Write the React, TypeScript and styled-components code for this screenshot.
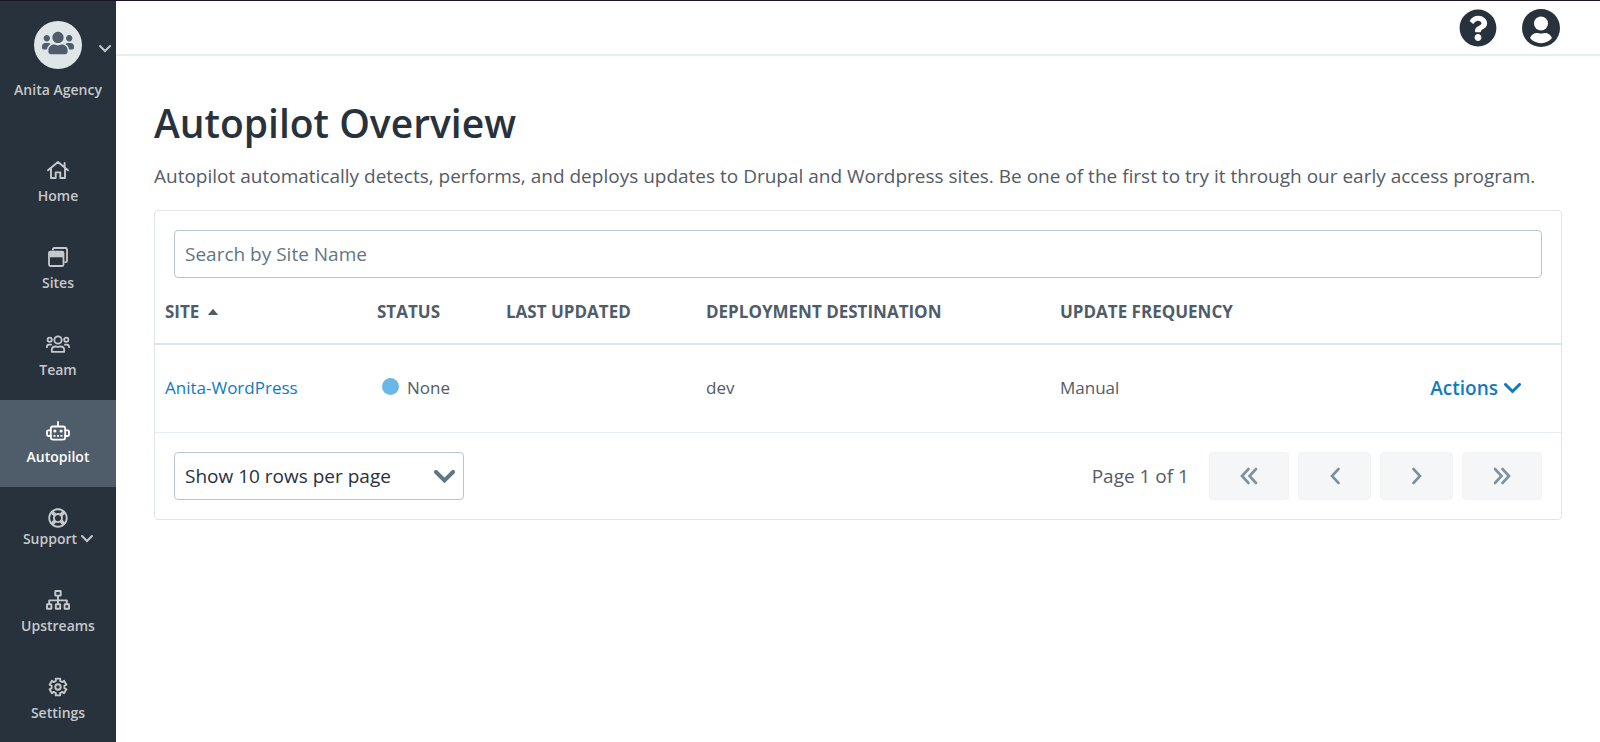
import React from "react";
import styled, { createGlobalStyle } from "styled-components";
import { FaQuestionCircle, FaRegLifeRing, FaUsers } from "react-icons/fa";

const color = {
  ink: "#28323c",
  slate: "#4f5d6b",
  text: "#545b65",
  muted: "#5f7686",
  link: "#0f7bbf",
  line: "#dde6e9",
  lineSoft: "#e8eeef",
  field: "#b5c5d0",
  nav: "#c6c9cc",
};

const GlobalStyle = createGlobalStyle`
  *, *::before, *::after { box-sizing: border-box; }
  body {
    margin: 0;
    background: #fff;
    color: ${color.text};
    font-family: "Open Sans", "Noto Sans", sans-serif;
    font-size: 19px;
    font-weight: 450;
  }
  button, input, select { font: inherit; }
  svg { display: block; flex: none; }
`;

const Page = styled.div`
  display: flex;
  min-height: 100vh;
  border-top: 1px solid #1a1424;
`;

/* ---------- Sidebar ---------- */

const Sidebar = styled.aside`
  flex: none;
  width: 116px;
  background: ${color.ink};
  color: ${color.nav};
  font-size: 14px;
  font-weight: 550;
  line-height: 20px;
`;

const Workspace = styled.button`
  display: grid;
  grid-template-columns: 1fr 48px 1fr;
  align-items: center;
  row-gap: 11px;
  width: 100%;
  height: 138px;
  padding: 20px 0 0;
  align-content: start;
  border: 0;
  background: none;
  color: inherit;
  cursor: pointer;
`;

const Avatar = styled.span`
  grid-column: 2;
  display: grid;
  place-items: center;
  width: 48px;
  height: 48px;
  padding-bottom: 4px;
  border-radius: 50%;
  background: #dfe6e8;
  color: ${color.slate};
`;

const WorkspaceToggle = styled.span`
  justify-self: end;
  padding: 7px 5px 0 0;
`;

const WorkspaceName = styled.span`
  grid-column: 1 / -1;
  text-align: center;
`;

const NavLink = styled.a<{ $active?: boolean; $compact?: boolean }>`
  display: flex;
  flex-direction: column;
  align-items: center;
  gap: ${(p) => (p.$compact ? 0 : 5)}px;
  height: ${(p) => (p.$compact ? 82 : 87)}px;
  padding-top: 20px;
  background: ${(p) => (p.$active ? color.slate : "none")};
  color: ${(p) => (p.$active ? "#fff" : "inherit")};
  text-decoration: none;
`;

const NavIcon = styled.span`
  display: grid;
  place-items: center;
  height: 22px;
`;

const NavLabel = styled.span`
  display: flex;
  align-items: center;
  gap: 4px;
`;

/* ---------- Header ---------- */

const Content = styled.div`
  flex: 1;
  min-width: 0;
`;

const TopBar = styled.header`
  display: flex;
  justify-content: flex-end;
  align-items: center;
  gap: 25px;
  height: 55px;
  padding-right: 40px;
  border-bottom: 2px solid ${color.lineSoft};
`;

const RoundButton = styled.button`
  padding: 0;
  border: 0;
  border-radius: 50%;
  background: none;
  color: ${color.ink};
  cursor: pointer;
`;

/* ---------- Main ---------- */

const Main = styled.main`
  padding: 40px 38px;
`;

const Title = styled.h1`
  margin: 0;
  color: ${color.ink};
  font-size: 39px;
  font-weight: 600;
  line-height: 54px;
`;

const Intro = styled.p`
  margin: 12px 0 20px;
  line-height: 28px;
`;

const Card = styled.section`
  border: 1px solid ${color.line};
  border-radius: 4px;
`;

const SearchRow = styled.div`
  padding: 19px 19px 0;
`;

const SearchInput = styled.input`
  display: block;
  width: 100%;
  height: 48px;
  padding: 0 10px;
  border: 1px solid ${color.field};
  border-radius: 4px;
  background: #fff;
  color: ${color.ink};
  &::placeholder { color: ${color.muted}; opacity: 1; }
`;

const Table = styled.table`
  width: 100%;
  table-layout: fixed;
  border-collapse: collapse;
  font-size: 17px;
  font-weight: 400;
  line-height: 24px;
`;

const Col = styled.col<{ $width?: number }>`
  width: ${(p) => (p.$width ? `${p.$width}px` : "auto")};
`;

const HeadCell = styled.th`
  height: 66px;
  padding: 2px 10px 0;
  border-bottom: 2px solid ${color.line};
  color: ${color.slate};
  font-weight: 700;
  text-align: left;
  white-space: nowrap;
`;

const SortButton = styled.button`
  display: flex;
  align-items: center;
  gap: 9px;
  padding: 0;
  border: 0;
  background: none;
  color: inherit;
  cursor: pointer;
`;

const Cell = styled.td<{ $end?: boolean }>`
  height: 88px;
  padding: 0 ${(p) => (p.$end ? 40 : 10)}px 0 10px;
  border-bottom: 1px solid ${color.lineSoft};
`;

const SiteLink = styled.a`
  color: ${color.link};
  text-decoration: none;
`;

const Status = styled.span`
  display: flex;
  align-items: center;
  gap: 8px;
  padding-left: 5px;
`;

const Dot = styled.span`
  width: 17px;
  height: 17px;
  margin-bottom: 4px;
  border-radius: 50%;
  background: #6bb7e8;
`;

const ActionsButton = styled.button`
  display: flex;
  align-items: center;
  gap: 6px;
  margin-left: auto;
  padding: 0;
  border: 0;
  background: none;
  color: ${color.link};
  font-size: 19px;
  font-weight: 600;
  cursor: pointer;
`;

const Footer = styled.div`
  display: flex;
  justify-content: space-between;
  align-items: center;
  padding: 19px;
`;

const SelectBox = styled.div`
  position: relative;
  width: 290px;
`;

const Select = styled.select`
  display: block;
  width: 100%;
  height: 48px;
  padding: 0 40px 0 10px;
  appearance: none;
  border: 1px solid ${color.field};
  border-radius: 4px;
  background: #fff;
  color: ${color.ink};
`;

const SelectArrow = styled.span`
  position: absolute;
  top: 18px;
  right: 9px;
  color: ${color.muted};
  pointer-events: none;
`;

const Pager = styled.nav`
  display: flex;
  align-items: center;
  gap: 9px;
`;

const PageInfo = styled.span`
  margin-right: 11px;
`;

const PageButton = styled.button<{ $wide?: boolean }>`
  display: grid;
  place-items: center;
  width: ${(p) => (p.$wide ? 80 : 73)}px;
  height: 48px;
  padding: 0;
  border: 1px solid #f1f4f5;
  border-radius: 4px;
  background: #f4f6f8;
  color: #82909c;
`;

/* ---------- Icons ---------- */

const line = {
  fill: "none",
  stroke: "currentColor",
  strokeWidth: 2,
  strokeLinecap: "round",
  strokeLinejoin: "round",
} as const;

/* Right-angled chevron: its depth follows from its width. */
const Chevron = ({ width, weight }: { width: number; weight: number }) => {
  const m = weight / 2;
  return (
    <svg width={width} height={Math.ceil(width / 2 + weight * 0.7)} aria-hidden="true">
      <path
        {...line}
        strokeWidth={weight}
        strokeLinejoin="miter"
        d={`M${m} ${m}L${width / 2} ${width / 2}L${width - m} ${m}`}
      />
    </svg>
  );
};

const HomeIcon = () => (
  <svg width="24" height="20" viewBox="0 0 24 20" aria-hidden="true">
    <path {...line} strokeWidth={1.9} d="M2 10.3L12 2l10 8.3M18.6 3v4M5 8.6V18h4.7v-5.6h4.6V18H19V8.6" />
  </svg>
);

const SitesIcon = () => (
  <svg width="20" height="20" viewBox="0 0 20 20" aria-hidden="true">
    <path {...line} strokeWidth={1.8} d="M4.9 2.8V2.4Q4.9 1 6.3 1H17.6Q19 1 19 2.4V13.7Q19 15.1 17.6 15.1H17" />
    <rect {...line} strokeWidth={1.8} x="1" y="4.6" width="14.5" height="14.4" rx="1.4" />
    <path fill="currentColor" d="M1 5h14.5v5.3H1z" />
  </svg>
);

const TeamIcon = () => (
  <svg width="24" height="18" viewBox="0 0 24 18" aria-hidden="true">
    <g {...line} strokeWidth={1.8}>
      <circle cx="12" cy="5" r="3.7" />
      <circle cx="3.7" cy="4.7" r="2.1" />
      <circle cx="20.3" cy="4.7" r="2.1" />
      <path d="M5.8 16.8v-1.6c0-2.2 1.5-3.7 3.5-3.7 1 0 1.5.5 2.7.5s1.7-.5 2.7-.5c2 0 3.5 1.5 3.5 3.7v1.6z" />
      <path d="M.9 12.2c0-1.6.9-2.5 2.4-2.5h1.8M23.1 12.2c0-1.6-.9-2.5-2.4-2.5h-1.8" />
    </g>
  </svg>
);

const RobotIcon = () => (
  <svg width="24" height="20" viewBox="0 0 24 20" aria-hidden="true">
    <g {...line} strokeWidth={1.8}>
      <path d="M12 1v4" />
      <path d="M7 5.5H17Q19.2 5.5 19.2 7.7V16.2Q19.2 18.6 16.8 18.6H7.2Q4.8 18.6 4.8 16.2V7.7Q4.8 5.5 7 5.5z" />
      <path d="M4.8 9.3H2.2Q1 9.3 1 10.5V13.8Q1 15 2.2 15H4.8M19.2 9.3H21.8Q23 9.3 23 10.5V13.8Q23 15 21.8 15H19.2" />
    </g>
    <g fill="currentColor">
      <circle cx="8.9" cy="10" r="1.6" />
      <circle cx="15.1" cy="10" r="1.6" />
      <path d="M7.5 14h2v1.8h-2zM11 14h2v1.8h-2zM14.5 14h2v1.8h-2z" />
    </g>
  </svg>
);

const UpstreamsIcon = () => (
  <svg width="24" height="20" viewBox="0 0 24 20" aria-hidden="true">
    <g {...line} strokeWidth={1.9}>
      <rect x="9.3" y="1" width="5.4" height="4.6" rx=".4" />
      <rect x="1" y="14.3" width="4.4" height="4.5" rx=".4" />
      <rect x="9.8" y="14.3" width="4.4" height="4.5" rx=".4" />
      <rect x="18.6" y="14.3" width="4.4" height="4.5" rx=".4" />
      <path d="M12 6v8M3.2 14v-3.6h17.6V14" />
    </g>
  </svg>
);

/* Six-toothed gear outline, one tooth pointing straight up. */
const gearPath =
  Array.from({ length: 6 }, (_, tooth) =>
    [
      [6.4, -30],
      [6.5, -19],
      [8.7, -15],
      [8.7, 15],
      [6.5, 19],
    ]
      .map(([radius, offset]) => {
        const angle = ((tooth * 60 + offset - 90) * Math.PI) / 180;
        return `${(10 + radius * Math.cos(angle)).toFixed(2)} ${(10 + radius * Math.sin(angle)).toFixed(2)}`;
      })
      .join("L")
  ).reduce((path, part, i) => path + (i ? "L" : "M") + part, "") + "Z";

const GearIcon = () => (
  <svg width="20" height="20" viewBox="0 0 20 20" aria-hidden="true">
    <g {...line} strokeWidth={1.9}>
      <path d={gearPath} />
      <circle cx="10" cy="10" r="2.7" />
    </g>
  </svg>
);

const UserCircleIcon = () => (
  <svg width="38" height="38" viewBox="0 0 38 38" aria-hidden="true">
    <circle cx="19" cy="19" r="19" fill="currentColor" />
    <circle cx="19" cy="14.5" r="7" fill="#fff" />
    <path fill="#fff" d="M8 29c1.5-3.2 3.9-5 7-5 1.4 0 2 .6 4 .6s2.6-.6 4-.6c3.1 0 5.5 1.8 7 5-2.7 3.3-6.6 5.2-11 5.2S10.700 32.300 8 29z" />
  </svg>
);

const SortUpIcon = () => (
  <svg width="10" height="6" viewBox="0 0 10 6" aria-hidden="true">
    <path fill="currentColor" d="M.6 6Q-.2 6 .4 5.2L4.4.4Q5-.2 5.6.4L9.6 5.2Q10.2 6 9.4 6z" />
  </svg>
);

const PageArrow = ({ double, forward }: { double?: boolean; forward?: boolean }) => {
  const width = double ? 18 : 10;
  return (
    <svg width={width} height="18" viewBox={`0 0 ${width} 18`} aria-hidden="true">
      <g {...line} strokeWidth={2.6} strokeLinejoin="miter" transform={forward ? `translate(${width} 0) scale(-1 1)` : undefined}>
        <path d="M8.5 2L2 9l6.5 7" />
        {double && <path d="M16 2L9.5 9l6.5 7" />}
      </g>
    </svg>
  );
};

/* ---------- Page ---------- */

const navItems = [
  { label: "Home", icon: <HomeIcon /> },
  { label: "Sites", icon: <SitesIcon /> },
  { label: "Team", icon: <TeamIcon /> },
  { label: "Autopilot", icon: <RobotIcon />, active: true },
  { label: "Support", icon: <FaRegLifeRing size={20} />, menu: true },
  { label: "Upstreams", icon: <UpstreamsIcon /> },
  { label: "Settings", icon: <GearIcon /> },
];

const sites = [{ name: "Anita-WordPress", status: "None", updated: "", destination: "dev", frequency: "Manual" }];

export default function App() {
  return (
    <Page>
      <GlobalStyle />
      <Sidebar>
        <Workspace type="button">
          <Avatar>
            <FaUsers size={32} />
          </Avatar>
          <WorkspaceToggle>
            <Chevron width={12} weight={2} />
          </WorkspaceToggle>
          <WorkspaceName>Anita Agency</WorkspaceName>
        </Workspace>
        <nav aria-label="Main">
          {navItems.map((item) => (
            <NavLink
              key={item.label}
              href="#"
              $active={item.active}
              $compact={item.menu}
              aria-current={item.active ? "page" : undefined}
            >
              <NavIcon>{item.icon}</NavIcon>
              <NavLabel>
                {item.label}
                {item.menu && <Chevron width={12} weight={2} />}
              </NavLabel>
            </NavLink>
          ))}
        </nav>
      </Sidebar>

      <Content>
        <TopBar>
          <RoundButton type="button" aria-label="Help">
            <FaQuestionCircle size={38} />
          </RoundButton>
          <RoundButton type="button" aria-label="Account">
            <UserCircleIcon />
          </RoundButton>
        </TopBar>

        <Main>
          <Title>Autopilot Overview</Title>
          <Intro>
            Autopilot automatically detects, performs, and deploys updates to Drupal and Wordpress sites. Be one of the
            first to try it through our early access program.
          </Intro>

          <Card>
            <SearchRow>
              <SearchInput type="search" aria-label="Search by Site Name" placeholder="Search by Site Name" />
            </SearchRow>
            <Table>
              <colgroup>
                <Col $width={212} />
                <Col $width={129} />
                <Col $width={200} />
                <Col $width={354} />
                <Col />
                <Col />
              </colgroup>
              <thead>
                <tr>
                  <HeadCell scope="col" aria-sort="ascending">
                    <SortButton type="button">
                      SITE <SortUpIcon />
                    </SortButton>
                  </HeadCell>
                  <HeadCell scope="col">STATUS</HeadCell>
                  <HeadCell scope="col">LAST UPDATED</HeadCell>
                  <HeadCell scope="col">DEPLOYMENT DESTINATION</HeadCell>
                  <HeadCell scope="col">UPDATE FREQUENCY</HeadCell>
                  <HeadCell scope="col" aria-label="Actions" />
                </tr>
              </thead>
              <tbody>
                {sites.map((site) => (
                  <tr key={site.name}>
                    <Cell>
                      <SiteLink href="#">{site.name}</SiteLink>
                    </Cell>
                    <Cell>
                      <Status>
                        <Dot />
                        {site.status}
                      </Status>
                    </Cell>
                    <Cell>{site.updated}</Cell>
                    <Cell>{site.destination}</Cell>
                    <Cell>{site.frequency}</Cell>
                    <Cell $end>
                      <ActionsButton type="button">
                        Actions
                        <Chevron width={17} weight={3} />
                      </ActionsButton>
                    </Cell>
                  </tr>
                ))}
              </tbody>
            </Table>
            <Footer>
              <SelectBox>
                <Select aria-label="Rows per page">
                  <option>Show 10 rows per page</option>
                </Select>
                <SelectArrow>
                  <Chevron width={21} weight={4} />
                </SelectArrow>
              </SelectBox>
              <Pager aria-label="Pagination">
                <PageInfo>Page 1 of 1</PageInfo>
                <PageButton type="button" $wide aria-label="First page">
                  <PageArrow double />
                </PageButton>
                <PageButton type="button" aria-label="Previous page">
                  <PageArrow />
                </PageButton>
                <PageButton type="button" aria-label="Next page">
                  <PageArrow forward />
                </PageButton>
                <PageButton type="button" $wide aria-label="Last page">
                  <PageArrow double forward />
                </PageButton>
              </Pager>
            </Footer>
          </Card>
        </Main>
      </Content>
    </Page>
  );
}
